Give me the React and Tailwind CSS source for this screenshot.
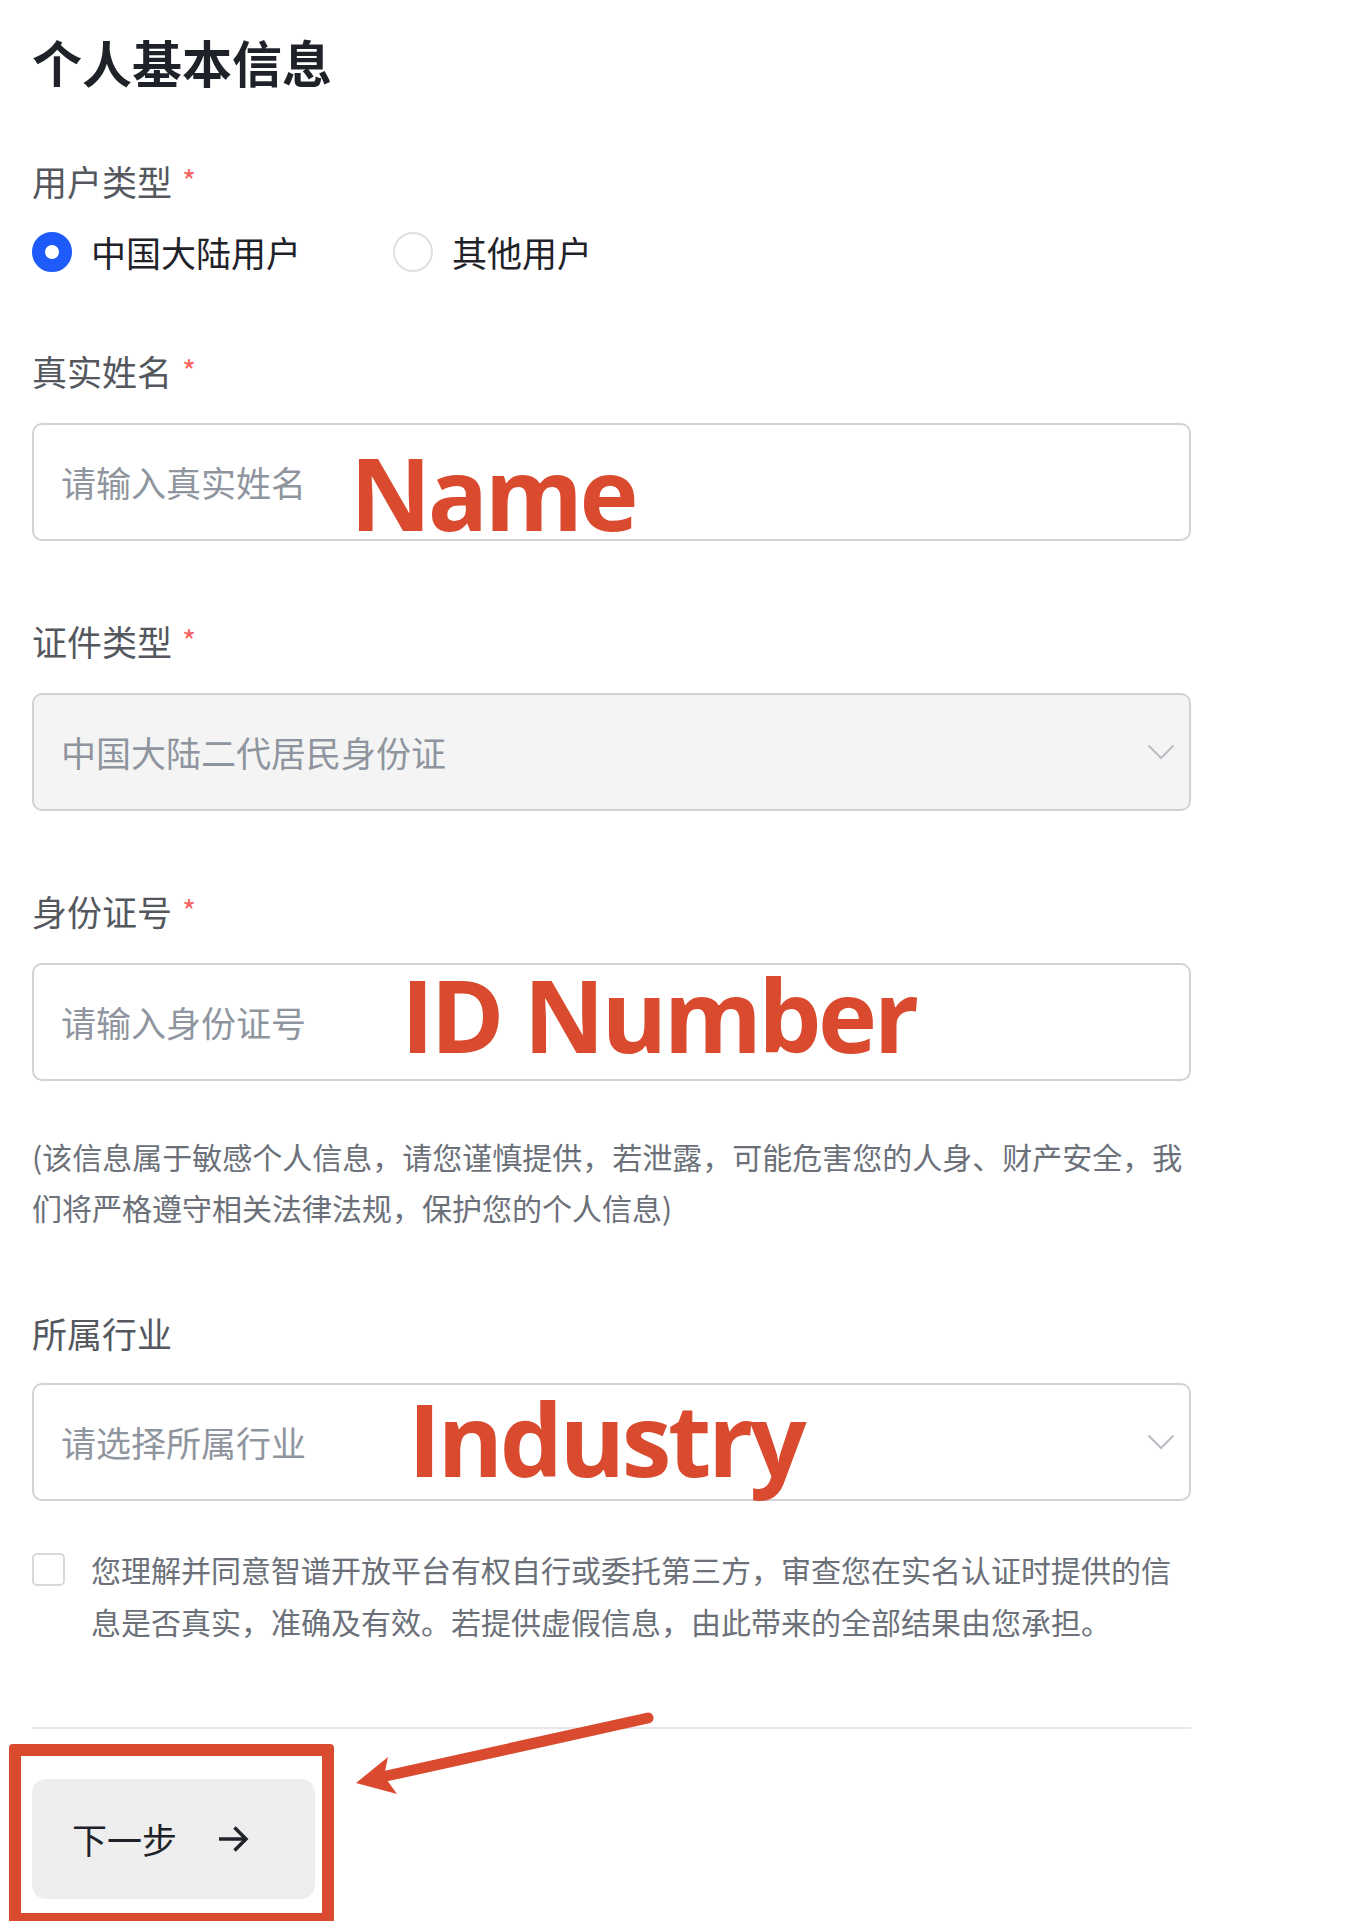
import React from "react";

const Label = ({ text, required }) => (
  <div className="flex items-start h-[50px] leading-[50px] text-[35px] text-[#54585e]">
    <span>{text}</span>
    {required && (
      <span className="ml-[10px] mt-[4px] text-[30px] leading-[40px] text-[#f76560]">*</span>
    )}
  </div>
);

const Chevron = () => (
  <svg width="28" height="16" viewBox="0 0 28 16" className="absolute right-[14px] top-1/2 -translate-y-1/2">
    <polyline points="1.5,1.5 14,14 26.5,1.5" fill="none" stroke="#b9bdc3" strokeWidth="2" />
  </svg>
);

const Radio = ({ checked, label }) => (
  <div className="flex items-center">
    {checked ? (
      <div className="w-[40px] h-[40px] rounded-full border-[13px] border-[#1d5bfa] bg-white" />
    ) : (
      <div className="w-[40px] h-[40px] rounded-full border-2 border-[#dee0e3] bg-white" />
    )}
    <span className="ml-[19px] text-[35px] leading-[50px] text-[#1f2329]">{label}</span>
  </div>
);

const Note = ({ text }) => (
  <span className="absolute font-['Open_Sans',sans-serif] font-bold text-[100px] leading-[100px] tracking-[-0.035em] text-[#d94a2f] whitespace-nowrap">
    {text}
  </span>
);

const App = () => {
  return (
    <div className="relative w-[1371px] h-[1921px] overflow-hidden bg-white font-['Noto_Sans_CJK_SC','Noto_Sans',sans-serif]">
      <div className="pl-[32px] w-[1191px]">
        <h1 className="pt-[26px] leading-[70px] text-[50px] font-bold text-[#1f2329]">
          个人基本信息
        </h1>

        <div className="mt-[60px]">
          <Label text="用户类型" required />
        </div>
        <div className="mt-[21px] flex h-[50px] items-center gap-[92px]">
          <Radio checked label="中国大陆用户" />
          <Radio label="其他用户" />
        </div>

        <div className="mt-[69px]">
          <Label text="真实姓名" required />
        </div>
        <div className="relative mt-[27px] h-[118px] rounded-[10px] border-2 border-[#d2d2d2] flex items-center pl-[27px] text-[35px] text-[#8f959e]">
          请输入真实姓名
          <div className="absolute left-[316px] top-[17px]">
            <Note text="Name" />
          </div>
        </div>

        <div className="mt-[75px]">
          <Label text="证件类型" required />
        </div>
        <div className="relative mt-[27px] h-[118px] rounded-[10px] border-2 border-[#d2d2d2] bg-[#f4f4f4] flex items-center pl-[27px] text-[35px] text-[#8f959e]">
          中国大陆二代居民身份证
          <Chevron />
        </div>

        <div className="mt-[75px]">
          <Label text="身份证号" required />
        </div>
        <div className="relative mt-[27px] h-[118px] rounded-[10px] border-2 border-[#d2d2d2] flex items-center pl-[27px] text-[35px] text-[#8f959e]">
          请输入身份证号
          <div className="absolute left-[367px] top-[-1px]">
            <Note text="ID Number" />
          </div>
        </div>

        <p className="mt-[50px] text-[30px] leading-[51px] text-[#6b7079]">
          (该信息属于敏感个人信息，请您谨慎提供，若泄露，可能危害您的人身、财产安全，我
          <br />
          们将严格遵守相关法律法规，保护您的个人信息)
        </p>

        <div className="mt-[75px]">
          <Label text="所属行业" />
        </div>
        <div className="relative mt-[25px] h-[118px] rounded-[10px] border-2 border-[#d2d2d2] flex items-center pl-[27px] text-[35px] text-[#8f959e]">
          请选择所属行业
          <Chevron />
          <div className="absolute left-[374px] top-[3px]">
            <Note text="Industry" />
          </div>
        </div>

        <div className="mt-[42px] flex items-start">
          <div className="mt-[10px] w-[33px] h-[33px] shrink-0 rounded-[5px] border-2 border-[#d5d8dc] bg-white" />
          <p className="ml-[26px] text-[30px] leading-[52px] text-[#6b7079]">
            您理解并同意智谱开放平台有权自行或委托第三方，审查您在实名认证时提供的信
            <br />
            息是否真实，准确及有效。若提供虚假信息，由此带来的全部结果由您承担。
          </p>
        </div>

        <div className="mt-[80px] h-[2px] bg-[#e8e8e8]" />

        <button className="mt-[50px] flex h-[120px] w-[283px] items-center rounded-[14px] bg-[#eeeeee] pl-[40px] text-[35px] text-[#1f2329]">
          下一步
          <svg width="32" height="28" viewBox="0 0 32 28" className="ml-[40px]">
            <path d="M2 14 H29" stroke="#1f2329" strokeWidth="3.5" fill="none" />
            <path d="M17.5 2.5 L29 14 L17.5 25.5" stroke="#1f2329" strokeWidth="3.5" fill="none" />
          </svg>
        </button>
      </div>

      <div className="absolute left-[9px] top-[1744px] w-[325px] h-[181px] rounded-[4px] border-[12px] border-[#d94a2f]" />

      <svg width="330" height="110" viewBox="0 0 330 110" className="absolute left-[340px] top-[1700px]">
        <line x1="308" y1="18" x2="46" y2="76" stroke="#d94a2f" strokeWidth="11" strokeLinecap="round" />
        <polygon points="16,83 48,57 44,76 57,94" fill="#d94a2f" />
      </svg>
    </div>
  );
};

export default App;
